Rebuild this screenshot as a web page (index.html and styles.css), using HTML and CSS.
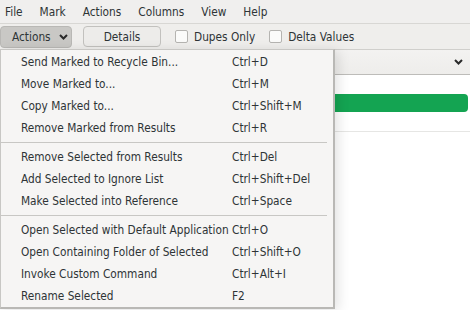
FILE: index.html
```html
<!DOCTYPE html>
<html lang="en">
  <head>
    <meta charset="utf-8" />
    <title>dupeGuru - Actions</title>
    <link rel="stylesheet" href="styles.css">
  </head>
  <body>
    <nav class="menubar">
      <span class="menu-title">File</span>
      <span class="menu-title">Mark</span>
      <span class="menu-title">Actions</span>
      <span class="menu-title">Columns</span>
      <span class="menu-title">View</span>
      <span class="menu-title">Help</span>
    </nav>

    <div class="toolbar">
      <button type="button" class="tool-btn pressed">Actions
        <svg class="chevron" width="9" height="6" viewBox="0 0 9 6"><path d="M1 1l3.5 3.5L8 1" fill="none" stroke="#2a2a2a" stroke-width="2"/></svg>
      </button>
      <button type="button" class="tool-btn details">Details</button>
      <label class="check"><span class="box"></span>Dupes Only</label>
      <label class="check"><span class="box"></span>Delta Values</label>
    </div>

    <main class="results">
      <div class="combo-row">
        <svg class="chevron" width="9" height="6" viewBox="0 0 9 6"><path d="M1 1l3.5 3.5L8 1" fill="none" stroke="#2a2a2a" stroke-width="2"/></svg>
      </div>
      <div class="progress-row">
        <div class="progress-bar"></div>
      </div>
      <div class="empty"></div>
    </main>

    <div class="popup-menu">
      <div class="menu-item"><span>Send Marked to Recycle Bin...</span><span>Ctrl+D</span></div>
      <div class="menu-item"><span>Move Marked to...</span><span>Ctrl+M</span></div>
      <div class="menu-item"><span>Copy Marked to...</span><span>Ctrl+Shift+M</span></div>
      <div class="menu-item"><span>Remove Marked from Results</span><span>Ctrl+R</span></div>
      <hr class="sep">
      <div class="menu-item"><span>Remove Selected from Results</span><span>Ctrl+Del</span></div>
      <div class="menu-item"><span>Add Selected to Ignore List</span><span>Ctrl+Shift+Del</span></div>
      <div class="menu-item"><span>Make Selected into Reference</span><span>Ctrl+Space</span></div>
      <hr class="sep">
      <div class="menu-item"><span>Open Selected with Default Application</span><span>Ctrl+O</span></div>
      <div class="menu-item"><span>Open Containing Folder of Selected</span><span>Ctrl+Shift+O</span></div>
      <div class="menu-item"><span>Invoke Custom Command</span><span>Ctrl+Alt+I</span></div>
      <div class="menu-item"><span>Rename Selected</span><span>F2</span></div>
    </div>
  </body>
</html>
```

FILE: styles.css
```css
* {
  margin: 0;
  padding: 0;
  box-sizing: border-box;
}

body {
  font-family: 'DejaVu Sans', sans-serif;
  font-stretch: condensed;
  font-size: 11.75px;
  color: #2e3436;
  background: #ffffff;
  width: 470px;
  height: 310px;
  overflow: hidden;
  position: relative;
}

.menubar {
  display: flex;
  height: 24px;
  align-items: center;
  padding-left: 5px;
  gap: 17px;
  background: #f0efee;
  border-bottom: 1px solid #d8d7d4;
}

.toolbar {
  display: flex;
  align-items: center;
  height: 26px;
  background: #efeeec;
  border-bottom: 1px solid #d0cfcc;
}

.tool-btn {
  font-family: inherit;
  font-stretch: inherit;
  font-size: 11.75px;
  color: #2e3436;
  height: 22px;
  border-radius: 4px;
  display: flex;
  align-items: center;
}

.tool-btn.pressed {
  width: 72px;
  padding-left: 11px;
  background: #c9c8c5;
  border: 1px solid #b9b8b5;
  gap: 8px;
}

.tool-btn.details {
  width: 78px;
  margin-left: 11px;
  justify-content: center;
  background: #edecea;
  border: 1px solid #c2c1be;
  height: 21px;
}

.check {
  display: flex;
  align-items: center;
  gap: 6px;
  margin-left: 14px;
}

.check + .check {
  margin-left: 14px;
}

.box {
  width: 13px;
  height: 13px;
  border: 1px solid #b5b4b1;
  border-radius: 2px;
  background: #fbfbfa;
}

.combo-row {
  height: 25px;
  display: flex;
  justify-content: flex-end;
  align-items: center;
  padding-right: 7px;
  background: linear-gradient(#f3f2f1, #eeedeb);
  border-bottom: 1px solid #bdbcb9;
}

.progress-row {
  height: 57px;
  padding-top: 19px;
  border-bottom: 1px solid #e6e6e4;
}

.progress-bar {
  margin-left: 300px;
  margin-right: 2px;
  height: 18px;
  border-radius: 4px;
  background: #14a452;
}

.popup-menu {
  position: absolute;
  left: 0;
  top: 49px;
  width: 335px;
  height: 260px;
  background: #f6f5f4;
  border: 1px solid #c8c7c4;
  border-right: 2px solid #b9b8b5;
  border-bottom: 2px solid #b9b8b5;
  box-shadow: 3px 2px 12px rgba(0, 0, 0, 0.12);
  padding-top: 1px;
}

.menu-item {
  display: grid;
  grid-template-columns: 211px auto;
  height: 22px;
  align-items: center;
  padding-left: 20px;
  color: #2e3436;
  white-space: nowrap;
}

.sep {
  border: none;
  border-top: 1px solid #c8c7c4;
  margin: 3px 6px 3px 0;
}
```
